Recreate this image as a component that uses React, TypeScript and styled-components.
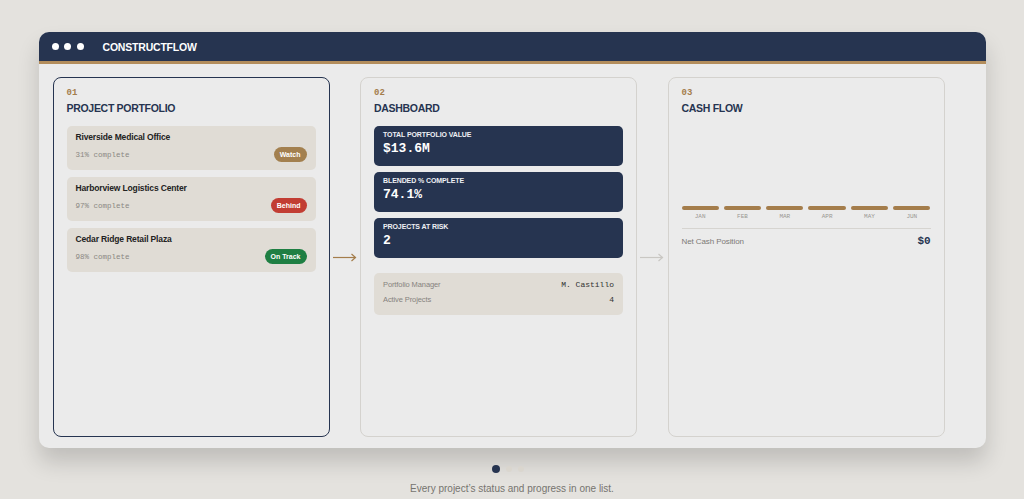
import styled, { createGlobalStyle } from 'styled-components';

const navy = '#263450';
const gold = '#a47d4b';
const sand = '#e0dcd5';

const GlobalStyle = createGlobalStyle`
  html, body {
    margin: 0;
    padding: 0;
    background: #e4e2de;
    font-family: "Liberation Sans", Arial, sans-serif;
  }
`;

type Status = 'watch' | 'behind' | 'ontrack';

const projects: { name: string; pct: number; status: Status; label: string }[] = [
  { name: 'Riverside Medical Office', pct: 31, status: 'watch', label: 'Watch' },
  { name: 'Harborview Logistics Center', pct: 97, status: 'behind', label: 'Behind' },
  { name: 'Cedar Ridge Retail Plaza', pct: 98, status: 'ontrack', label: 'On Track' },
];

const stats = [
  { label: 'TOTAL PORTFOLIO VALUE', value: '$13.6M' },
  { label: 'BLENDED % COMPLETE', value: '74.1%' },
  { label: 'PROJECTS AT RISK', value: '2' },
];

const months = ['JAN', 'FEB', 'MAR', 'APR', 'MAY', 'JUN'];

const badgeColors: Record<Status, string> = {
  watch: '#a3804f',
  behind: '#c23d33',
  ontrack: '#1f7f43',
};

const Arrow = ({ color }: { color: string }) => (
  <svg width="24" height="9" viewBox="0 0 24 9" fill="none">
    <path d="M0 4.5H22.5" stroke={color} strokeWidth="1.2" />
    <path d="M18.5 1L22.5 4.5L18.5 8" stroke={color} strokeWidth="1.2" />
  </svg>
);

export default function App() {
  return (
    <>
      <GlobalStyle />
      <Page>
        <Window>
          <TitleBar>
            <Dots>
              <Dot />
              <Dot />
              <Dot />
            </Dots>
            <AppName>CONSTRUCTFLOW</AppName>
          </TitleBar>
          <Body>
            <Panel $active>
              <StepNo>01</StepNo>
              <PanelTitle>PROJECT PORTFOLIO</PanelTitle>
              <Stack>
                {projects.map((p) => (
                  <ProjectCard key={p.name}>
                    <ProjectName>{p.name}</ProjectName>
                    <ProjectRow>
                      <Progress>{p.pct}% complete</Progress>
                      <Badge $status={p.status}>{p.label}</Badge>
                    </ProjectRow>
                  </ProjectCard>
                ))}
              </Stack>
            </Panel>
            <Connector>
              <Arrow color={gold} />
            </Connector>
            <Panel>
              <StepNo>02</StepNo>
              <PanelTitle>DASHBOARD</PanelTitle>
              <StatStack>
                {stats.map((s) => (
                  <StatCard key={s.label}>
                    <StatLabel>{s.label}</StatLabel>
                    <StatValue>{s.value}</StatValue>
                  </StatCard>
                ))}
              </StatStack>
              <InfoBox>
                <InfoRow>
                  <span>Portfolio Manager</span>
                  <InfoValue>M. Castillo</InfoValue>
                </InfoRow>
                <InfoRow>
                  <span>Active Projects</span>
                  <InfoValue>4</InfoValue>
                </InfoRow>
              </InfoBox>
            </Panel>
            <Connector>
              <Arrow color="#c9c7c3" />
            </Connector>
            <Panel>
              <StepNo>03</StepNo>
              <PanelTitle>CASH FLOW</PanelTitle>
              <Chart>
                {months.map((m) => (
                  <Bar key={m} />
                ))}
              </Chart>
              <MonthRow>
                {months.map((m) => (
                  <Month key={m}>{m}</Month>
                ))}
              </MonthRow>
              <NetRow>
                <span>Net Cash Position</span>
                <NetValue>$0</NetValue>
              </NetRow>
            </Panel>
          </Body>
        </Window>
        <Pager>
          <PagerDot $on />
          <PagerDot />
          <PagerDot />
        </Pager>
        <Caption>Every project’s status and progress in one list.</Caption>
      </Page>
    </>
  );
}

const Page = styled.div`
  padding-top: 32px;
  display: flex;
  flex-direction: column;
  align-items: center;
`;

const Window = styled.div`
  width: 947px;
  height: 416px;
  border-radius: 10px;
  background: #ebebeb;
  box-shadow: 0 14px 22px rgba(0, 0, 0, 0.16);
  overflow: hidden;
  display: flex;
  flex-direction: column;
`;

const TitleBar = styled.div`
  height: 29px;
  background: ${navy};
  border-bottom: 3px solid #b38d5c;
  display: flex;
  align-items: center;
  padding-left: 13px;
  gap: 19px;
`;

const Dots = styled.div`
  display: flex;
  gap: 5.5px;
`;

const Dot = styled.span`
  width: 7px;
  height: 7px;
  border-radius: 50%;
  background: #fff;
`;

const AppName = styled.div`
  color: #fff;
  font-weight: 700;
  font-size: 10.5px;
  letter-spacing: -0.2px;
`;

const Body = styled.div`
  display: flex;
  padding: 13px 14px 11px;
  flex: 1;
`;

const Panel = styled.div<{ $active?: boolean }>`
  width: 277px;
  flex-shrink: 0;
  box-sizing: border-box;
  border-radius: 8px;
  border: ${(p) => (p.$active ? `1.5px solid ${navy}` : '1px solid #d4d2ce')};
  padding: 9px 13px 0;
  display: flex;
  flex-direction: column;
`;

const Connector = styled.div`
  width: 30.5px;
  display: flex;
  align-items: center;
  justify-content: center;
`;

const StepNo = styled.div`
  font-family: "Liberation Mono", "DejaVu Sans Mono", monospace;
  font-weight: 700;
  font-size: 9px;
  line-height: 12px;
  color: ${gold};
`;

const PanelTitle = styled.div`
  margin-top: 3px;
  font-weight: 700;
  font-size: 10.5px;
  letter-spacing: -0.3px;
  line-height: 13px;
  color: ${navy};
  margin-bottom: 11px;
`;

const Stack = styled.div`
  display: flex;
  flex-direction: column;
  gap: 7px;
`;

const ProjectCard = styled.div`
  height: 44px;
  box-sizing: border-box;
  background: ${sand};
  border-radius: 5px;
  padding: 5px 9px 0;
`;

const ProjectName = styled.div`
  font-weight: 700;
  font-size: 8.5px;
  letter-spacing: -0.15px;
  line-height: 12px;
  color: #222;
`;

const ProjectRow = styled.div`
  margin-top: 4px;
  display: flex;
  justify-content: space-between;
  align-items: center;
`;

const Progress = styled.span`
  font-family: "Liberation Mono", "DejaVu Sans Mono", monospace;
  font-size: 7.5px;
  color: #8a8782;
`;

const Badge = styled.span<{ $status: Status }>`
  height: 15px;
  padding: 0 6px;
  border-radius: 8px;
  background: ${(p) => badgeColors[p.$status]};
  color: #fff;
  font-weight: 700;
  font-size: 7px;
  line-height: 15px;
`;

const StatStack = styled.div`
  display: flex;
  flex-direction: column;
  gap: 6px;
`;

const StatCard = styled.div`
  height: 40px;
  box-sizing: border-box;
  background: ${navy};
  border-radius: 5px;
  padding: 4px 9px 0;
`;

const StatLabel = styled.div`
  color: #eef0f4;
  font-weight: 700;
  font-size: 7px;
  letter-spacing: -0.1px;
  line-height: 10px;
`;

const StatValue = styled.div`
  color: #fff;
  font-family: "Liberation Mono", "DejaVu Sans Mono", monospace;
  font-weight: 700;
  font-size: 13px;
  line-height: 17px;
`;

const InfoBox = styled.div`
  margin-top: 15px;
  background: ${sand};
  border-radius: 5px;
  padding: 4px 9px 8px;
`;

const InfoRow = styled.div`
  height: 15px;
  display: flex;
  align-items: center;
  justify-content: space-between;
  font-size: 7.5px;
  letter-spacing: -0.1px;
  color: #86837e;
`;

const InfoValue = styled.span`
  font-family: "Liberation Mono", "DejaVu Sans Mono", monospace;
  font-size: 8px;
  letter-spacing: 0;
  color: #333;
`;

const Chart = styled.div`
  height: 84px;
  display: flex;
  align-items: flex-end;
  gap: 5px;
`;

const Bar = styled.div`
  flex: 1;
  height: 4px;
  border-radius: 2px;
  background: ${gold};
`;

const MonthRow = styled.div`
  margin-top: 3px;
  display: flex;
  gap: 5px;
  padding-bottom: 8px;
  border-bottom: 1px solid #d6d4d0;
`;

const Month = styled.span`
  flex: 1;
  text-align: center;
  font-family: "Liberation Mono", "DejaVu Sans Mono", monospace;
  font-size: 6px;
  color: #9a9792;
`;

const NetRow = styled.div`
  margin-top: 6px;
  display: flex;
  justify-content: space-between;
  align-items: center;
  font-size: 8px;
  letter-spacing: -0.1px;
  color: #7d7a76;
`;

const NetValue = styled.span`
  font-family: "Liberation Mono", "DejaVu Sans Mono", monospace;
  font-weight: 700;
  font-size: 11px;
  color: ${navy};
`;

const Pager = styled.div`
  margin-top: 17px;
  display: flex;
  align-items: center;
  gap: 6px;
  margin-right: 8px;
`;

const PagerDot = styled.span<{ $on?: boolean }>`
  width: ${(p) => (p.$on ? 8 : 6)}px;
  height: ${(p) => (p.$on ? 8 : 6)}px;
  border-radius: 50%;
  background: ${(p) => (p.$on ? navy : '#dad6ce')};
`;

const Caption = styled.div`
  margin-top: 10px;
  font-size: 10px;
  color: #76746f;
`;
